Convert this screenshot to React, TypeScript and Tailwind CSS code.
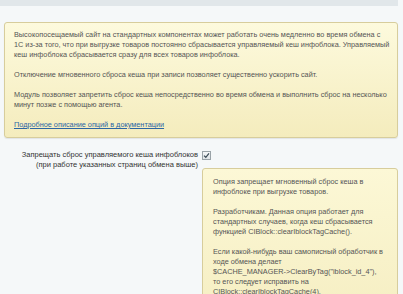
import React from "react";

const font = { fontFamily: '"Liberation Sans", Arial, sans-serif' };

function CheckBox() {
  return (
    <span className="flex h-[9px] w-[9px] items-center justify-center border border-[#9aa3a8] bg-gradient-to-b from-[#f4f6f7] to-[#dfe4e7]">
      <svg width="7" height="7" viewBox="0 0 7 7">
        <path d="M1 3.6 L2.8 5.3 L6 1.3" fill="none" stroke="#3a4a55" strokeWidth="1.2" />
      </svg>
    </span>
  );
}

export default function App() {
  return (
    <div className="h-[294px] w-[403px] overflow-hidden bg-[#f5f8f9] text-[7.3px]" style={font}>
      <div className="mr-[5px] h-[6px] bg-[#e1e7ea]" />

      <div className="mx-[5px] mt-[16px] ml-[4px] rounded-[3px] border border-[#d7cd9c] bg-gradient-to-b from-[#fdfadd] to-[#f4ecbd] px-[9px] py-[7px] leading-[10px] text-[#555] shadow-[0_1px_1px_rgba(0,0,0,0.08)]">
        <p className="whitespace-nowrap">
          Высокопосещаемый сайт на стандартных компонентах может работать очень медленно во время обмена с
          <br />
          1С из-за того, что при выгрузке товаров постоянно сбрасывается управляемый кеш инфоблока. Управляемый
          <br />
          кеш инфоблока сбрасывается сразу для всех товаров инфоблока.
        </p>
        <p className="mt-[10px]">Отключение мгновенного сброса кеша при записи позволяет существенно ускорить сайт.</p>
        <p className="mt-[10px] whitespace-nowrap">
          Модуль позволяет запретить сброс кеша непосредственно во время обмена и выполнить сброс на несколько
          <br />
          минут позже с помощью агента.
        </p>
        <p className="mt-[10px]">
          <a href="#" className="text-[#2c66a4] underline">
            Подробное описание опций в документации
          </a>
        </p>
      </div>

      <div className="mt-[12px] flex">
        <div className="w-[199px] pr-[1px] text-right text-[7.5px] leading-[9.5px] text-[#333]">
          Запрещать сброс управляемого кеша инфоблоков
          <br />
          (при работе указанных страниц обмена выше)
        </div>
        <div className="ml-[3px] mr-[5px] flex-1">
          <div className="pt-[1px]">
            <CheckBox />
          </div>
          <div className="mt-[8px] rounded-[3px] border border-[#d7cd9c] bg-gradient-to-b from-[#fcf8d6] to-[#f6efc4] py-[8px] pl-[10px] leading-[10px] text-[#555] whitespace-nowrap">
            <p>
              Опция запрещает мгновенный сброс кеша в
              <br />
              инфоблоке при выгрузке товаров.
            </p>
            <p className="mt-[10px]">
              Разработчикам. Данная опция работает для
              <br />
              стандартных случаев, когда кеш сбрасывается
              <br />
              функцией CIBlock::clearIblockTagCache().
            </p>
            <p className="mt-[10px]">
              Если какой-нибудь ваш самописный обработчик в
              <br />
              ходе обмена делает
              <br />
              $CACHE_MANAGER-&gt;ClearByTag("iblock_id_4"),
              <br />
              то его следует исправить на
              <br />
              CIBlock::clearIblockTagCache(4).
            </p>
          </div>
        </div>
      </div>
    </div>
  );
}
